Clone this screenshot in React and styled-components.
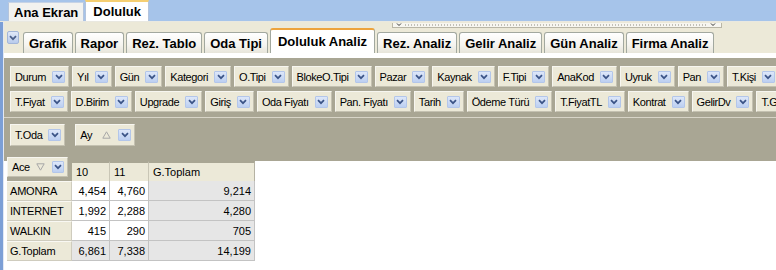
import React from "react";
import styled, { createGlobalStyle } from "styled-components";

const GlobalStyle = createGlobalStyle`
  html, body { margin: 0; padding: 0; background: #fff; }
  body { font-family: "Liberation Sans", Arial, sans-serif; color: #000; }
`;

const mainTabs = [
  { label: "Ana Ekran" },
  { label: "Doluluk", active: true },
];

const analysisTabs = [
  "Grafik", "Rapor", "Rez. Tablo", "Oda Tipi", "Doluluk Analiz",
  "Rez. Analiz", "Gelir Analiz", "Gün Analiz", "Firma Analiz",
];
const activeTab = "Doluluk Analiz";

const filterRows = [
  ["Durum", "Yıl", "Gün", "Kategori", "O.Tipi", "BlokeO.Tipi", "Pazar", "Kaynak", "F.Tipi", "AnaKod", "Uyruk", "Pan", "T.Kişi"],
  ["T.Fiyat", "D.Birim", "Upgrade", "Giriş", "Oda Fiyatı", "Pan. Fiyatı", "Tarih", "Ödeme Türü", "T.FiyatTL", "Kontrat", "GelirDv", "T.Gece"],
];

const columns = ["10", "11", "G.Toplam"];
const rows = [
  { name: "AMONRA", values: ["4,454", "4,760", "9,214"] },
  { name: "INTERNET", values: ["1,992", "2,288", "4,280"] },
  { name: "WALKIN", values: ["415", "290", "705"] },
  { name: "G.Toplam", values: ["6,861", "7,338", "14,199"], total: true },
];

const Chevron = ({ color = "#3b5487" }) => (
  <svg width="8" height="6" viewBox="0 0 8 6">
    <path d="M1 1.2 L4 4.2 L7 1.2" fill="none" stroke={color} strokeWidth="1.7" />
  </svg>
);

const SortMark = ({ up }) => (
  <svg width="9" height="8" viewBox="0 0 9 8">
    {up ? (
      <polygon points="4.5,0.8 8.2,7.2 0.8,7.2" fill="none" stroke="#a7a7a7" strokeWidth="1" />
    ) : (
      <polygon points="0.8,0.8 8.2,0.8 4.5,7.2" fill="none" stroke="#a7a7a7" strokeWidth="1" />
    )}
  </svg>
);

export default function App() {
  return (
    <>
      <GlobalStyle />
      <Page>
        <TopBar>
          {mainTabs.map((t) => (
            <MainTab key={t.label} $active={t.active}>{t.label}</MainTab>
          ))}
        </TopBar>
        <Body>
          <LeftStrip />
          <Content>
            <TabBand>
              <ScrollGrip>
                <svg width="328" height="4" viewBox="0 0 328 4">
                  <path d="M4 0.5 L6 2.5 L8 0.5" fill="none" stroke="#333" strokeWidth="1" />
                  <line x1="12" y1="2" x2="314" y2="2" stroke="#8d8b80" strokeWidth="1" strokeDasharray="1 2" />
                  <path d="M318 0.5 L320 2.5 L322 0.5" fill="none" stroke="#333" strokeWidth="1" />
                </svg>
              </ScrollGrip>
              <TabRow>
                <MenuButton><Chevron color="#4a5f8a" /></MenuButton>
                {analysisTabs.map((t) => (
                  <AnalysisTab key={t} $active={t === activeTab}>{t}</AnalysisTab>
                ))}
              </TabRow>
            </TabBand>
            <TabPageTop />
            <FilterArea>
              {filterRows.map((row, i) => (
                <FilterRow key={i}>
                  {row.map((f) => (
                    <FieldButton key={f}>
                      <FieldLabel>{f}</FieldLabel>
                      <DropBox><Chevron /></DropBox>
                    </FieldButton>
                  ))}
                </FilterRow>
              ))}
              <Separator />
              <AxisRow>
                <FieldButton $tall>
                  <FieldLabel>T.Oda</FieldLabel>
                  <DropBox><Chevron /></DropBox>
                </FieldButton>
                <FieldButton $tall>
                  <FieldLabel $wide>Ay</FieldLabel>
                  <SortSlot><SortMark up /></SortSlot>
                  <DropBox><Chevron /></DropBox>
                </FieldButton>
              </AxisRow>
            </FilterArea>
            <TableArea>
              <PivotGrid>
                <Corner>
                  <AceButton>
                    <FieldLabel>Ace</FieldLabel>
                    <SortSlot><SortMark /></SortSlot>
                    <DropBox><Chevron /></DropBox>
                  </AceButton>
                </Corner>
                {columns.map((c) => (
                  <ColHead key={c}>{c}</ColHead>
                ))}
                {rows.map((r) => (
                  <React.Fragment key={r.name}>
                    <RowHead>{r.name}</RowHead>
                    {r.values.map((v, j) => (
                      <Cell key={j} $total={r.total || j === r.values.length - 1}>{v}</Cell>
                    ))}
                  </React.Fragment>
                ))}
              </PivotGrid>
            </TableArea>
          </Content>
        </Body>
      </Page>
    </>
  );
}

const Page = styled.div`
  width: 776px;
  height: 270px;
  overflow: hidden;
  background: #fff;
  display: flex;
  flex-direction: column;
`;

const TopBar = styled.div`
  height: 21px;
  flex-shrink: 0;
  background: #a6c4ea;
  display: flex;
  align-items: flex-end;
  padding-left: 8px;
  border-bottom: 1px solid #e9e8e0;
`;

const MainTab = styled.div`
  box-sizing: border-box;
  height: ${(p) => (p.$active ? 21 : 19)}px;
  padding: 0 ${(p) => (p.$active ? 7 : 5)}px;
  display: flex;
  align-items: center;
  font-size: 13px;
  font-weight: bold;
  background: ${(p) => (p.$active ? "#fff" : "#f2f2ef")};
  border: 1px solid #b4c4dc;
  border-bottom: none;
  border-top: ${(p) => (p.$active ? "2px solid #f5cf72" : "1px solid #c6d3e6")};
  margin-right: 1px;
`;

const Body = styled.div`
  flex: 1;
  display: flex;
  min-height: 0;
`;

const LeftStrip = styled.div`
  width: 3px;
  flex-shrink: 0;
  background: #7c9fd6;
`;

const Content = styled.div`
  flex: 1;
  min-width: 0;
  border-left: 1px solid #e2e8f3;
  display: flex;
  flex-direction: column;
`;

const TabBand = styled.div`
  height: 31px;
  flex-shrink: 0;
  box-sizing: border-box;
  padding-top: 1px;
  background: #ece9d8;
`;

const ScrollGrip = styled.div`
  box-sizing: border-box;
  margin-left: 388px;
  width: 330px;
  height: 5px;
  background: #f7f6f0;
  border: 1px solid #b9b6a6;
  border-top: none;
  display: flex;
  align-items: center;
  overflow: hidden;
`;

const TabRow = styled.div`
  height: 25px;
  display: flex;
  align-items: flex-end;
  padding-left: 3px;
`;

const MenuButton = styled.div`
  box-sizing: border-box;
  align-self: flex-start;
  margin-top: 3px;
  margin-right: 4px;
  width: 12px;
  height: 13px;
  border: 1px solid #a3b6d9;
  border-radius: 2px;
  background: linear-gradient(#dfe8f8, #b9cbec);
  display: flex;
  align-items: center;
  justify-content: center;
`;

const AnalysisTab = styled.div`
  box-sizing: border-box;
  height: ${(p) => (p.$active ? 25 : 21)}px;
  padding: 0 ${(p) => (p.$active ? 7 : 5)}px;
  margin-right: 2px;
  display: flex;
  align-items: center;
  font-size: 13px;
  font-weight: bold;
  white-space: nowrap;
  border: 1px solid #a2a89f;
  border-bottom: none;
  border-radius: 3px 3px 0 0;
  background: ${(p) =>
    p.$active ? "#fff" : "linear-gradient(#ffffff, #f5f4ef 60%, #e7e5da)"};
  border-top: ${(p) => (p.$active ? "2px solid #eda33c" : "1px solid #a2a89f")};
`;

const TabPageTop = styled.div`
  height: 5px;
  flex-shrink: 0;
  background: #fff;
`;

const FilterArea = styled.div`
  height: 103px;
  flex-shrink: 0;
  box-sizing: border-box;
  padding: 8px 0 0 6px;
  background: #a9a694;
  overflow: hidden;
`;

const FilterRow = styled.div`
  display: flex;
  gap: 3px;
  height: 21px;
  & + & { margin-top: 4px; }
`;

const Separator = styled.div`
  margin: 5px 0 6px -6px;
  border-top: 1px solid #d8d5c8;
`;

const AxisRow = styled.div`
  display: flex;
  gap: 10px;
  height: 22px;
`;

const FieldButton = styled.div`
  box-sizing: border-box;
  flex-shrink: 0;
  height: ${(p) => (p.$tall ? 22 : 21)}px;
  display: inline-flex;
  align-items: center;
  padding: 0 3px 0 4px;
  background: #ece9d8;
  border-top: 1px solid #f7f6f0;
  border-left: 1px solid #f7f6f0;
  border-right: 1px solid #c4c1b1;
  border-bottom: 1px solid #c4c1b1;
  white-space: nowrap;
  font-size: 11px;
  letter-spacing: -0.4px;
`;

const FieldLabel = styled.span`
  margin-right: ${(p) => (p.$wide ? 10 : 6)}px;
`;

const SortSlot = styled.span`
  display: inline-flex;
  margin-right: 7px;
`;

const DropBox = styled.span`
  box-sizing: border-box;
  width: 13px;
  height: 12px;
  display: inline-flex;
  align-items: center;
  justify-content: center;
  background: linear-gradient(#dde7f9, #bccff1);
  border: 1px solid #b3c6ea;
  border-radius: 1px;
`;

const TableArea = styled.div`
  padding-left: 3px;
`;

const PivotGrid = styled.div`
  display: grid;
  grid-template-columns: 65px 38px 39px 106px;
  grid-auto-rows: 20px;
  width: max-content;
  font-size: 11px;
`;

const Corner = styled.div`
  background: #a9a694;
  display: flex;
  align-items: flex-start;
`;

const AceButton = styled(FieldButton)`
  margin-top: -4px;
  height: 20px;
  width: 61px;
`;

const ColHead = styled.div`
  box-sizing: border-box;
  display: flex;
  align-items: center;
  padding-left: 4px;
  background: #ece9d8;
  border-top: 2px solid #a9a694;
  border-right: 1px solid #c9c6b6;
  &:nth-child(4) { border-right: 1px solid #b5b2a3; }
`;

const RowHead = styled.div`
  box-sizing: border-box;
  display: flex;
  align-items: center;
  padding-left: 3px;
  background: #ece9d8;
  border-top: 1px solid #f9f8f3;
  border-bottom: 1px solid #cfccbe;
  border-right: 1px solid #cfccbe;
  letter-spacing: -0.2px;
`;

const Cell = styled.div`
  box-sizing: border-box;
  display: flex;
  align-items: center;
  justify-content: flex-end;
  padding-right: 3px;
  background: ${(p) => (p.$total ? "#e6e6e6" : "#fff")};
  border-right: 1px solid #c3c3c3;
  border-bottom: 1px solid #c3c3c3;
`;
